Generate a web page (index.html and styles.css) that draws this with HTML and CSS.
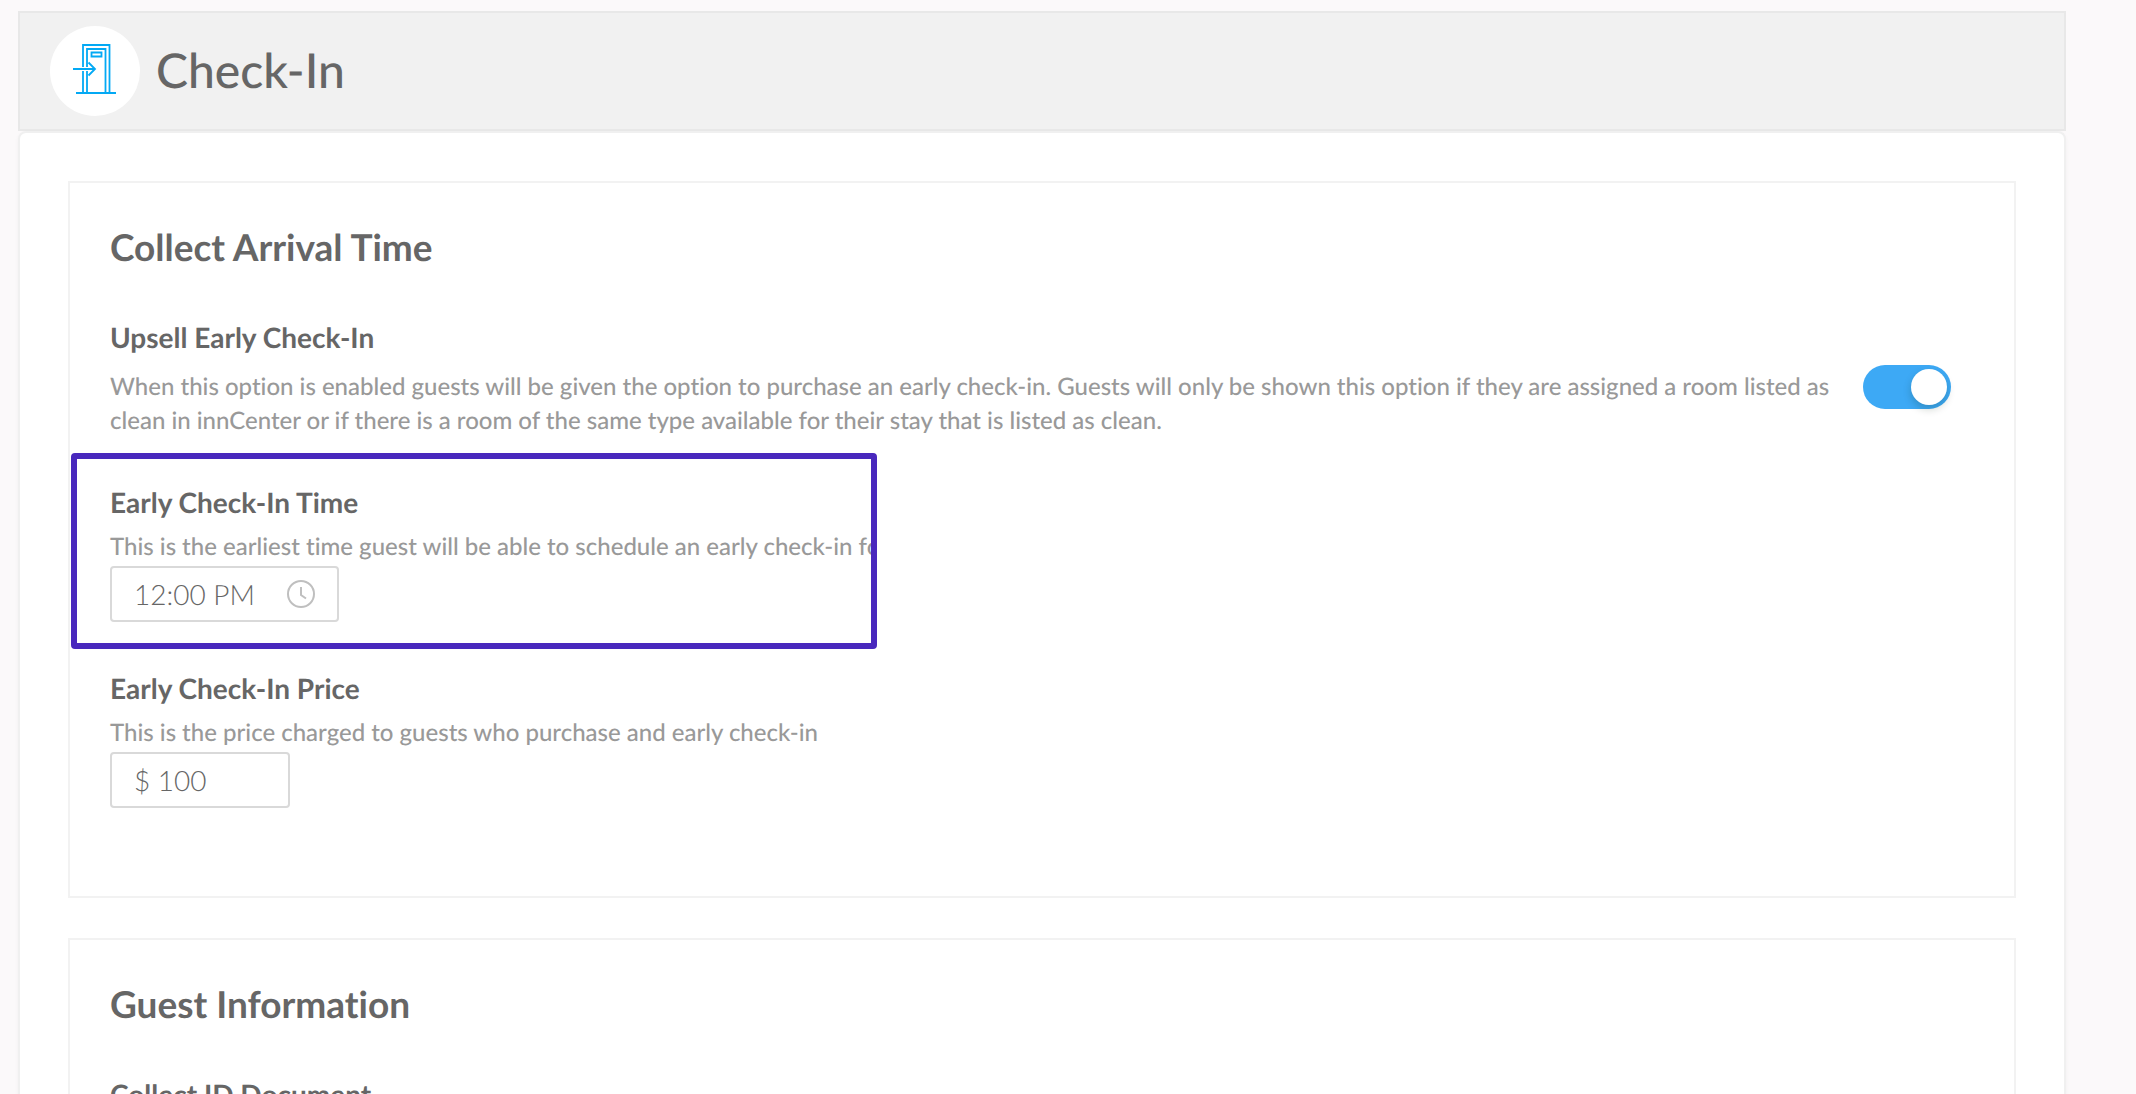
FILE: index.html
```html
<!DOCTYPE html>
<html lang="en">
<head>
<meta charset="utf-8">
<title>Check-In</title>
<link rel="stylesheet" href="styles.css">
</head>
<body>
<main class="page">
  <header class="page-header">
    <span class="page-icon">
      <svg width="44" height="52" viewBox="0 0 44 52" fill="none" stroke="#03a9f4" aria-hidden="true">
        <path stroke-width="2" d="M0 26H21M3 50H43"/>
        <path stroke-width="1.800" d="M10 24V2H36.500V49M10 28V49M14 24V6H32.500V49M14 28V49"/>
        <path stroke-width="1.800" d="M18.500 9.500H28.500V13.500H18.500z"/>
        <path stroke-width="1.800" d="M15.500 19.500L22 26L15.500 32.500"/>
      </svg>
    </span>
    <h1 class="page-title">Check-In</h1>
  </header>

  <div class="panel">
    <section class="card">
      <h2 class="card-title">Collect Arrival Time</h2>

      <div class="setting">
        <div class="setting-text">
          <label class="label" for="upsell">Upsell Early Check-In</label>
          <p class="help">When this option is enabled guests will be given the option to purchase an early check-in. Guests will only be shown this option if they are assigned a room listed as clean in innCenter or if there is a room of the same type available for their stay that is listed as clean.</p>
        </div>
        <input class="toggle" id="upsell" type="checkbox" role="switch" checked>
      </div>

      <div class="field field-highlight">
        <label class="label" for="early-time">Early Check-In Time</label>
        <p class="help">This is the earliest time guest will be able to schedule an early check-in for</p>
        <div class="time-box">
          <input class="input input-time" id="early-time" type="text" value="12:00 PM">
          <svg class="clock" width="28" height="28" viewBox="0 0 28 28" fill="none" stroke="#bfbfbf" stroke-width="2" aria-hidden="true">
            <circle cx="14" cy="14" r="13"/>
            <path d="M14 7V15L19 18.500"/>
          </svg>
        </div>
      </div>

      <div class="field">
        <label class="label" for="early-price">Early Check-In Price</label>
        <p class="help">This is the price charged to guests who purchase and early check-in</p>
        <input class="input input-price" id="early-price" type="text" value="$ 100">
      </div>
    </section>

    <section class="card">
      <h2 class="card-title">Guest Information</h2>
      <h3 class="label">Collect ID Document</h3>
    </section>
  </div>
</main>
</body>
</html>
```
FILE: styles.css
```css
* {
  box-sizing: border-box;
}

body {
  margin: 0;
  height: 100vh;
  overflow: hidden;
  background: #fbf9fa;
  color: #666;
  font-family: Lato, "Liberation Sans", sans-serif;
  font-variant-ligatures: none;
  text-rendering: geometricPrecision;
}

h1, h2, h3, p {
  margin: 0;
}

.page {
  display: flex;
  flex-direction: column;
  min-height: 100vh;
  padding: 11px 70px 0 18px;
}

.page-header {
  display: flex;
  align-items: center;
  gap: 16px;
  height: 120px;
  padding: 0 30px;
  background: #f1f1f1;
  border: 2px solid #e8e8e8;
}

.page-icon {
  display: flex;
  align-items: center;
  justify-content: center;
  width: 90px;
  height: 90px;
  padding-bottom: 4px;
  border-radius: 50%;
  background: #fff;
}

.page-title {
  font-size: 48px;
  line-height: 58px;
  font-weight: 500;
}

.panel {
  display: flex;
  flex-direction: column;
  flex: 1;
  gap: 40px;
  padding: 48px 48px 0;
  background: #fff;
  border: 2px solid #f0f0f0;
  border-bottom: 0;
  border-radius: 8px 8px 0 0;
  box-shadow: 0 2px 4px rgba(0, 0, 0, 0.04);
}

.card {
  padding: 40px 40px 88px;
  border: 2px solid #f2f2f2;
}

.card-title {
  margin-bottom: 49px;
  font-size: 37px;
  line-height: 48px;
  font-weight: 700;
}

.label {
  display: block;
  font-size: 28px;
  line-height: 34px;
  font-weight: 700;
}

.help {
  color: #999;
  font-size: 24px;
  line-height: 34px;
  font-weight: 500;
}

.setting {
  display: flex;
  align-items: flex-start;
  gap: 28px;
  padding-right: 23px;
}

.setting-text {
  flex: 1;
}

.setting-text .help {
  margin-top: 16px;
}

.toggle {
  appearance: none;
  display: flex;
  align-items: center;
  flex: none;
  width: 88px;
  height: 44px;
  margin: 45px 0 0;
  padding: 4px;
  border-radius: 22px;
  background: #ccc;
}

.toggle::before {
  content: "";
  width: 36px;
  height: 36px;
  border-radius: 50%;
  background: #fff;
  box-shadow: 0 4px 8px rgba(0, 35, 11, 0.2);
}

.toggle:checked {
  justify-content: flex-end;
  background: #3da9f5;
}

.field .help {
  margin: 11px 0 2px;
}

.field-highlight {
  width: 806px;
  max-width: 100%;
  margin: 15px 0 22px -39px;
  padding: 26px 0 21px 33px;
  border: 6px solid #4928bd;
  border-radius: 4px;
  overflow: hidden;
  white-space: nowrap;
}

.time-box {
  position: relative;
  width: 229px;
}

.input {
  display: block;
  height: 56px;
  padding: 0 22px;
  border: 2px solid #d9d9d9;
  border-radius: 4px;
  background: #fff;
  color: #666;
  font-family: inherit;
  font-size: 28px;
  font-weight: 300;
  text-rendering: inherit;
}

.input-time {
  width: 100%;
}

.input-price {
  width: 180px;
}

.clock {
  position: absolute;
  top: 14px;
  right: 24px;
}
```
